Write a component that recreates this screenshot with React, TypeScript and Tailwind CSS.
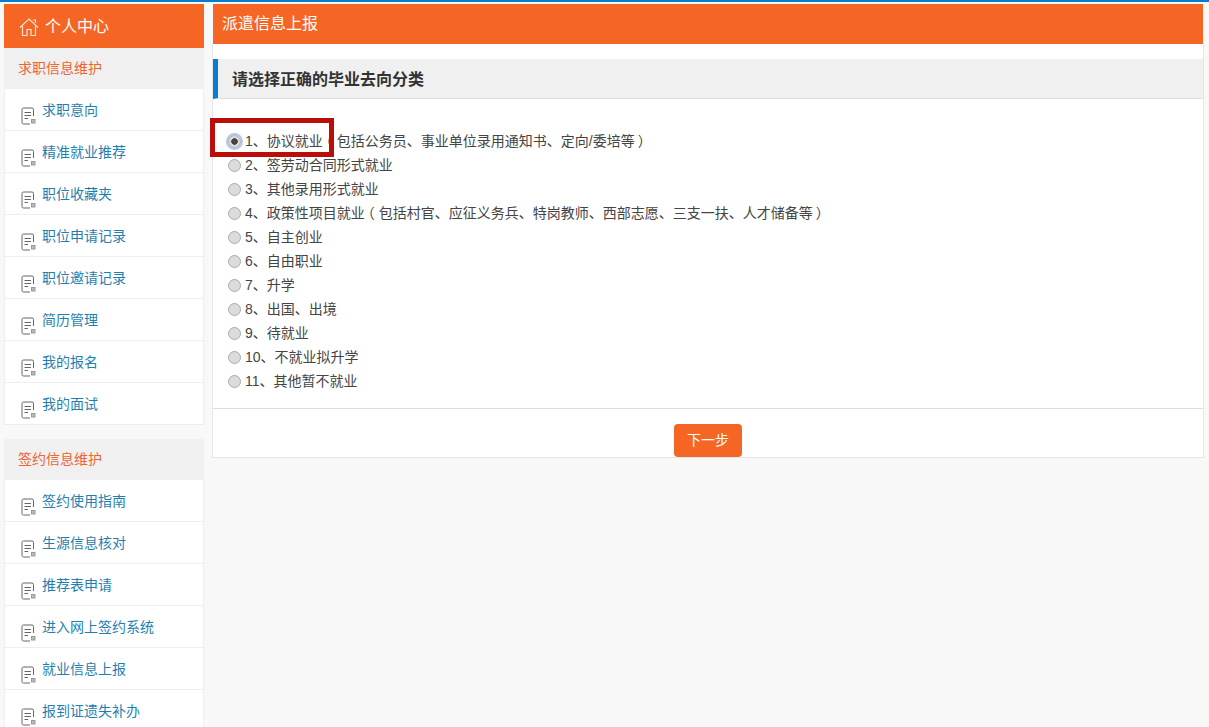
const jobItems = ["求职意向", "精准就业推荐", "职位收藏夹", "职位申请记录", "职位邀请记录", "简历管理", "我的报名", "我的面试"];
const signItems = ["签约使用指南", "生源信息核对", "推荐表申请", "进入网上签约系统", "就业信息上报", "报到证遗失补办"];

const options = [
  "1、协议就业（包括公务员、事业单位录用通知书、定向/委培等）",
  "2、签劳动合同形式就业",
  "3、其他录用形式就业",
  "4、政策性项目就业（包括村官、应征义务兵、特岗教师、西部志愿、三支一扶、人才储备等）",
  "5、自主创业",
  "6、自由职业",
  "7、升学",
  "8、出国、出境",
  "9、待就业",
  "10、不就业拟升学",
  "11、其他暂不就业",
];

const DocIcon = () => (
  <svg width="15" height="18" viewBox="0 0 15 18" fill="none" stroke="#666" strokeWidth="1" className="mt-[18px] shrink-0">
    <path d="M12.5 9V2.5A1.5 1.5 0 0 0 11 1H2.5A1.5 1.5 0 0 0 1 2.5v13A1.5 1.5 0 0 0 2.5 17H9" />
    <path d="M3.5 5.5h6.5M3.5 8.5h6.5M3.5 11.5h3.5" />
    <rect x="10.5" y="12.5" width="3.5" height="3.5" fill="#bbb" stroke="#999" />
  </svg>
);

const HomeIcon = () => (
  <svg width="20" height="20" viewBox="0 0 20 20" fill="none" stroke="#ffe3cf" strokeWidth="1.2">
    <path d="M1 10.5 10 2l9 8.5" />
    <path d="M3.5 9v9.5h4.5v-6h4v6h4.5V9" />
    <path d="M14 3h2.5v3" />
  </svg>
);

const Group = ({ title, items }: { title: string; items: string[] }) => (
  <div>
    <div className="h-[41px] bg-[#f0f0f0] pl-[14px] text-[14px] leading-[41px] text-[#ee6331]">{title}</div>
    <ul className="border-x border-[#eee] bg-white">
      {items.map((item) => (
        <li key={item} className="flex h-[42px] gap-[6px] border-b border-[#eee] pl-[16px]">
          <DocIcon />
          <a href="#" className="pt-[11px] text-[14px] leading-[20px] text-[#1f7fb0]">{item}</a>
        </li>
      ))}
    </ul>
  </div>
);

// brackets sit centred in their cell in the reference, this face pushes them to the inner side
const OptionText = ({ text }: { text: string }) => (
  <span>
    {text.split(/([（）])/).map((part, i) =>
      part === "（" ? (
        <span key={i} className="inline-block -translate-x-[4px]">{part}</span>
      ) : part === "）" ? (
        <span key={i} className="inline-block translate-x-[3px]">{part}</span>
      ) : (
        part
      )
    )}
  </span>
);

export default function App() {
  return (
    <div className="h-[727px] overflow-hidden border-t-2 border-[#0a7cd0] bg-[#f8f8f8] font-['Liberation_Sans','Noto_Sans_CJK_SC',sans-serif]">
      <div className="flex items-start gap-[8px] pl-[4px] pr-[5px] pt-[2px]">
        <aside className="w-[200px] shrink-0">
          <div className="flex h-[44px] items-center gap-[6px] bg-[#f56523] pl-[15px] pt-[2px] text-[16px] text-white">
            <HomeIcon />
            个人中心
          </div>
          <Group title="求职信息维护" items={jobItems} />
          <div className="h-[14px]" />
          <Group title="签约信息维护" items={signItems} />
        </aside>

        <main className="flex-1">
          <div className="mx-[1px] h-[40px] bg-[#f56523] pl-[9px] text-[16px] leading-[40px] text-white">派遣信息上报</div>
          <div className="relative border-x border-b border-[#e6e6e6] bg-white pt-[15px]">
            <h2 className="h-[40px] border-b border-[#ddd] border-l-[5px] border-l-[#0a7cd0] bg-[#f0f0f0] pl-[14px] text-[16px] font-bold leading-[41px] text-[#333]">
              请选择正确的毕业去向分类
            </h2>
            <div className="border-b border-[#ddd] pb-[15px] pl-[15px] pt-[30px]">
              {options.map((text, i) => (
                <label key={text} className="flex h-[24px] items-center gap-[4px] text-[14px] text-[#444]">
                  <input
                    type="radio"
                    name="destination"
                    defaultChecked={i === 0}
                    className="m-0 h-[13px] w-[13px] appearance-none rounded-full border border-[#aaa] bg-[#dcdcdc] checked:bg-[radial-gradient(circle,#444_0_3px,#dcdcdc_3.5px)] checked:outline-2 checked:outline-[#b4c6ea]"
                  />
                  <OptionText text={text} />
                </label>
              ))}
            </div>
            <div className="flex h-[48px] justify-center pt-[15px]">
              <button className="h-[33px] w-[68px] rounded-[4px] bg-[#f56523] text-[14px] text-white">下一步</button>
            </div>
            <div className="absolute left-[-3px] top-[74px] h-[39px] w-[124px] border-[5px] border-[#b80f0a]" />
          </div>
        </main>
      </div>
    </div>
  );
}
